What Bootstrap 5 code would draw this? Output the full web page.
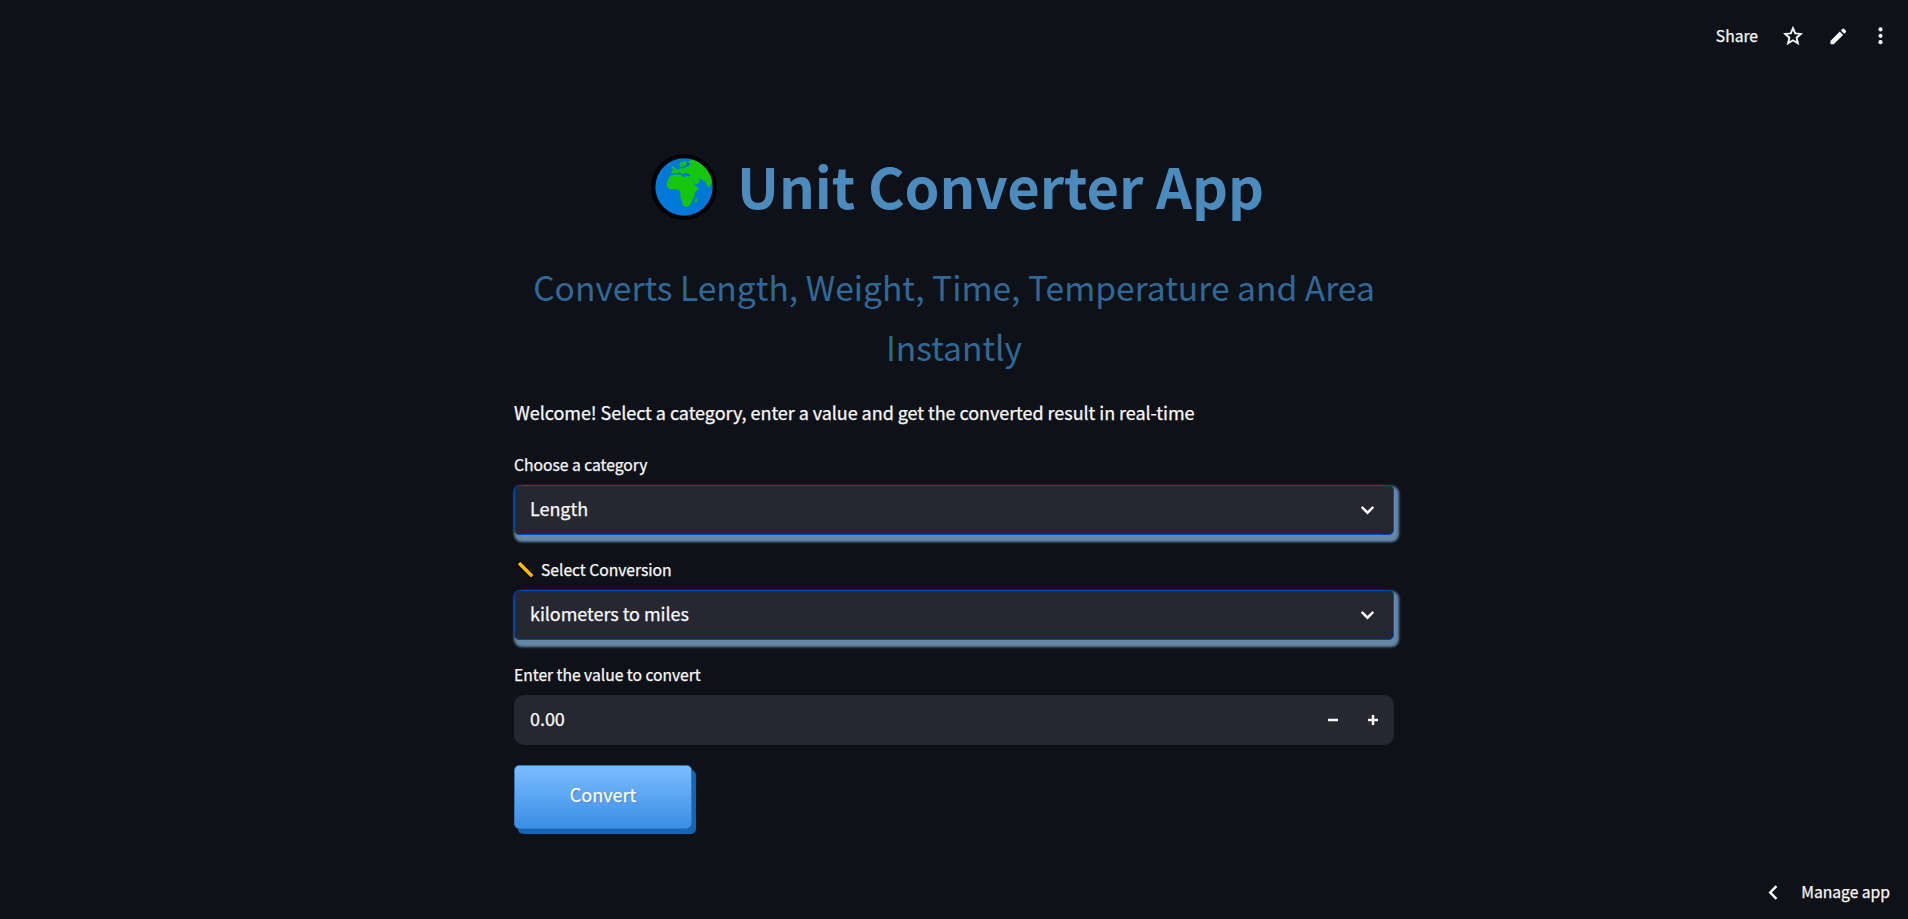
<!DOCTYPE html>
<html lang="en" data-bs-theme="dark">
<head>
<meta charset="utf-8">
<meta name="viewport" content="width=device-width, initial-scale=1">
<title>Unit Converter App</title>
<link href="https://cdn.jsdelivr.net/npm/bootstrap@5.3.0/dist/css/bootstrap.min.css" rel="stylesheet">
<style>
  body { background: #0e1117; color: #fafafa; font-family: "Noto Sans CJK SC", sans-serif; font-size: 18px; letter-spacing: -.05px; height: 100vh; overflow: hidden; -webkit-text-stroke: .25px; }
  svg { display: block; flex: none; }
  .toolbar { height: 72px; padding-right: 25px; }
  .small-text { font-size: 15.7px; letter-spacing: -.03px; line-height: 26px; }
  .converter { width: 880px; padding-top: 75px; }
  .app-title { font-size: 56px; font-weight: 700; line-height: 75px; color: #4b8bbe; letter-spacing: -.05px; margin: 0 0 35px; }
  .globe { margin: 4px 20px 0 7px; }
  .tagline { font-size: 33.6px; line-height: 60px; color: #306998; letter-spacing: 0; margin: 0 0 19px; }
  .app-title, .tagline { -webkit-text-stroke: 0; }
  .welcome { line-height: 32px; margin: 0 0 24px; }
  .field { margin-bottom: 22px; }
  .field:last-of-type { margin-bottom: 20px; }
  .field label { display: flex; align-items: center; height: 26px; margin-bottom: 7px; }
  .field-box { height: 50px; padding: 0 16px 3px; border-radius: 10px; background: #262730; }
  .select-box { border: 1px solid #0047ab; border-radius: 5px; padding: 0 19px 3px 15px; box-shadow: 2.5px 3.75px 2.5px 2.5px #6488a8; }
  .select-box svg { margin-top: 3px; }
  .btn-convert { width: 178px; height: 64px; padding: 0 0 5px; border: 1px solid #2f7ac6; border-radius: 5px; color: #fff; font-size: 18px; background: linear-gradient(#7bbcff, #3a8ee6); box-shadow: 4px 5px 0 #1565b0; text-shadow: 1px 1px 2px rgba(0,0,0,.2); }
</style>
</head>
<body class="d-flex flex-column">
<header class="toolbar d-flex align-items-center justify-content-end small-text">
  <span style="margin-right:25px">Share</span>
  <svg width="20" height="20" viewBox="0 0 20 20" fill="none" stroke="#fafafa" stroke-width="1.9" style="margin-right:27px"><path d="M10 2.2l2.2 5.2 5.7.5-4.3 3.8 1.3 5.6-4.9-3-4.9 3 1.3-5.6-4.3-3.8 5.7-.5z"/></svg>
  <svg width="17" height="17" viewBox="0 0 17 17" fill="#fafafa" style="margin-right:31px"><path d="M.4 13L9.8 3.6l3.3 3.3-9.4 9.4H1.2q-.8 0-.8-.8zM10.9 2.5l1.4-1.5q.9-.8 1.8 0l1.6 1.6q.8.9 0 1.8l-1.5 1.4z"/></svg>
  <svg width="5" height="18" viewBox="0 0 5 18" fill="#fafafa"><circle cx="2.5" cy="2.4" r="2.1"/><circle cx="2.5" cy="8.8" r="2.1"/><circle cx="2.5" cy="15.2" r="2.1"/></svg>
</header>

<main class="converter mx-auto">
  <h1 class="app-title d-flex justify-content-center align-items-center">
    <svg class="globe" width="66" height="66" viewBox="17 27 198 198">
      <defs><clipPath id="sea"><circle cx="116" cy="126" r="86"/></clipPath></defs>
      <circle cx="116" cy="126" r="99" fill="#000"/>
      <circle cx="116" cy="126" r="86" fill="#0078d7"/>
      <g fill="#16c60c" clip-path="url(#sea)">
        <path d="M76 91L89 89 100 88 107 89 110 94 117 96 124 93 139 95 142 106 147 118 152 125 160 126 157 134 148 144 147 157 140 165 138 174 131 182 122 186 115 184 112 178 110 167 105 158 105 142 101 134 94 132 73 133 66 127 64 118 66 107Z"/>
        <path d="M150 162l6-3v9l-4 5-3-3z"/>
        <path d="M98 59L108 51 120 48 124 53 121 60 112 65 104 65 105 61 113 58 114 55 105 60Z"/>
        <path d="M78 68L80 64 87 66 91 72 98 74 106 70 116 70 122 66 130 64 135 60 134 54 128 51 134 47 145 38 230 30 230 105 199 110 196 120 189 128 184 120 182 111 175 107 167 102 159 101 163 107 160 114 150 119 146 112 141 102 135 95 134 88 123 84 115 84 114 89 108 85 100 82 95 85 86 86 78 84 79 77 86 75 83 71Z"/>
      </g>
    </svg>
    <span>Unit Converter App</span>
  </h1>
  <p class="tagline text-center">Converts Length, Weight, Time, Temperature and Area Instantly</p>
  <p class="welcome">Welcome! Select a category, enter a value and get the converted result in real-time</p>

  <div class="field">
    <label class="small-text">Choose a category</label>
    <div class="field-box select-box d-flex align-items-center justify-content-between">
      <span>Length</span>
      <svg width="13" height="9" viewBox="0 0 13 9" fill="none" stroke="#fafafa" stroke-width="2.4" stroke-linecap="round"><path d="M1.4 1.6l5.1 5.1 5.1-5.1"/></svg>
    </div>
  </div>
  <div class="field">
    <label class="small-text">
      <svg width="18" height="18" viewBox="0 0 18 18" style="margin:0 6px 0 3px"><path d="M3 3l11.5 11.5" stroke="#000" stroke-width="6" stroke-linecap="square"/><path d="M2 2l13.2 13.2" stroke="#ffb900" stroke-width="3.6"/></svg>
      Select Conversion
    </label>
    <div class="field-box select-box d-flex align-items-center justify-content-between">
      <span>kilometers to miles</span>
      <svg width="13" height="9" viewBox="0 0 13 9" fill="none" stroke="#fafafa" stroke-width="2.4" stroke-linecap="round"><path d="M1.4 1.6l5.1 5.1 5.1-5.1"/></svg>
    </div>
  </div>
  <div class="field">
    <label class="small-text">Enter the value to convert</label>
    <div class="field-box d-flex align-items-center">
      <span class="me-auto">0.00</span>
      <svg width="10" height="10" viewBox="0 0 10 10" stroke="#fafafa" stroke-width="2.5" style="margin:3px 30px 0 0"><path d="M0 5h10"/></svg>
      <svg width="10" height="10" viewBox="0 0 10 10" stroke="#fafafa" stroke-width="2.5" style="margin-top:3px"><path d="M0 5h10M5 0v10"/></svg>
    </div>
  </div>
  <button class="btn btn-convert" type="button">Convert</button>
</main>

<footer class="mt-auto d-flex align-items-center justify-content-end small-text" style="padding:0 18px 14px 0">
  <svg width="10" height="15" viewBox="0 0 10 15" fill="none" stroke="#fafafa" stroke-width="2.4" style="margin:1px 23px 0 0"><path d="M8.5 1.2L2.2 7.5l6.3 6.3"/></svg>
  <span>Manage app</span>
</footer>
<script src="https://cdn.jsdelivr.net/npm/bootstrap@5.3.0/dist/js/bootstrap.bundle.min.js"></script>
</body>
</html>
